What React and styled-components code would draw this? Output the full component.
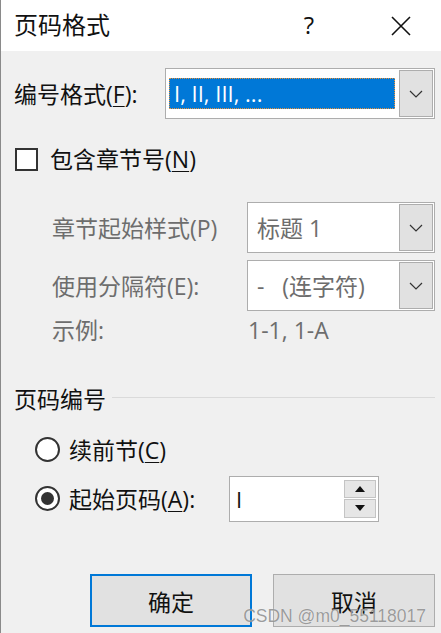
import React from "react"
import styled, { createGlobalStyle } from "styled-components"

const GlobalStyle = createGlobalStyle`
  html, body {
    margin: 0;
    padding: 0;
    background: #f0f0f0;
  }
  body {
    font-family: "Open Sans", "Noto Sans CJK SC", sans-serif;
  }
`

function Chevron() {
  return (
    <svg width="14" height="8" viewBox="0 0 14 8">
      <path d="M1 1 L7 7 L13 1" fill="none" stroke="#333" strokeWidth="1.2" />
    </svg>
  )
}

function ComboBox({ value, selected, disabled, width }) {
  return (
    <Combo width={width}>
      <ComboField>
        {selected ? (
          <Selection>{value}</Selection>
        ) : (
          <ComboText disabled={disabled}>{value}</ComboText>
        )}
      </ComboField>
      <DropButton>
        <Chevron />
      </DropButton>
    </Combo>
  )
}

export default function App() {
  return (
    <Window>
      <GlobalStyle />
      <TitleBar>
        <Title>页码格式</Title>
        <Help>?</Help>
        <Close>
          <svg width="20" height="20" viewBox="0 0 20 20">
            <path d="M1 1 L19 19 M19 1 L1 19" stroke="#111" strokeWidth="1.6" />
          </svg>
        </Close>
      </TitleBar>

      <Body>
        <FormatRow>
          <Label width={151}>
            编号格式(<u>F</u>):
          </Label>
          <ComboBox value="I, II, III, ..." selected width={270} />
        </FormatRow>

        <CheckRow>
          <CheckBox />
          <Label>
            包含章节号(<u>N</u>)
          </Label>
        </CheckRow>

        <Indent>
          <FieldRow top={28}>
            <Label width={195} disabled>
              章节起始样式(P)
            </Label>
            <ComboBox value="标题 1" disabled width={189} />
          </FieldRow>
          <FieldRow top={7}>
            <Label width={195} disabled>
              使用分隔符(E):
            </Label>
            <ComboBox value="-   (连字符)" disabled width={189} />
          </FieldRow>
          <ExampleRow>
            <Label width={196} disabled>
              示例:
            </Label>
            <Label disabled>1-1, 1-A</Label>
          </ExampleRow>
        </Indent>

        <SectionHeader>
          <Label>页码编号</Label>
          <Rule />
        </SectionHeader>

        <RadioRow top={12}>
          <Radio />
          <Label>
            续前节(<u>C</u>)
          </Label>
        </RadioRow>
        <RadioRow top={2}>
          <Radio checked />
          <Label width={160}>
            起始页码(<u>A</u>):
          </Label>
          <Spin>
            <SpinText>I</SpinText>
            <SpinButtons>
              <SpinButton>
                <svg width="10" height="6" viewBox="0 0 10 6">
                  <path d="M0 6 L5 0 L10 6 Z" fill="#111" />
                </svg>
              </SpinButton>
              <SpinButton>
                <svg width="10" height="6" viewBox="0 0 10 6">
                  <path d="M0 0 L5 6 L10 0 Z" fill="#111" />
                </svg>
              </SpinButton>
            </SpinButtons>
          </Spin>
        </RadioRow>
      </Body>

      <ButtonRow>
        <Button primary>确定</Button>
        <Button>取消</Button>
      </ButtonRow>

      <Watermark>CSDN @m0_55118017</Watermark>
    </Window>
  )
}

const Window = styled.div`
  position: relative;
  width: 440px;
  height: 633px;
  border-left: 1px solid #8a8a8a;
  background: #f0f0f0;
  display: flex;
  flex-direction: column;
  overflow: hidden;
  color: #111;
`

const TitleBar = styled.div`
  height: 51px;
  background: #ffffff;
  display: flex;
  align-items: center;
  padding-left: 13px;
`

const Title = styled.div`
  flex: 1;
  font-size: 24px;
  line-height: 30px;
  margin-top: -2px;
`

const Help = styled.div`
  font-size: 24px;
  width: 20px;
  text-align: center;
  margin-right: 72px;
  margin-top: -2px;
`

const Close = styled.div`
  width: 20px;
  height: 20px;
  margin-right: 30px;
  display: flex;
`

const Body = styled.div`
  padding: 0 6px 0 13px;
  display: flex;
  flex-direction: column;
`

const Label = styled.div`
  font-size: 23px;
  line-height: 30px;
  white-space: pre;
  flex-shrink: 0;
  width: ${(p) => (p.width ? `${p.width}px` : "auto")};
  color: ${(p) => (p.disabled ? "#6d6d6d" : "#111")};

  u {
    text-underline-offset: 3px;
    text-decoration-thickness: 1px;
  }
`

const FormatRow = styled.div`
  display: flex;
  align-items: center;
  margin-top: 17px;
`

const Combo = styled.div`
  width: ${(p) => p.width}px;
  height: 51px;
  box-sizing: border-box;
  border: 1px solid #adadad;
  background: #ffffff;
  display: flex;
  align-items: center;
  padding: 1px;
`

const ComboField = styled.div`
  flex: 1;
  height: 100%;
  display: flex;
  align-items: center;
  padding: 0 2px;
`

const Selection = styled.div`
  flex: 1;
  height: 31px;
  box-sizing: border-box;
  background: #0078d7;
  border: 1px dotted #e8923a;
  color: #ffffff;
  font-size: 22px;
  line-height: 28px;
  padding-left: 4px;
  margin-right: 2px;
`

const ComboText = styled.div`
  font-size: 23px;
  line-height: 30px;
  padding-left: 6px;
  white-space: pre;
  color: ${(p) => (p.disabled ? "#6d6d6d" : "#111")};
`

const DropButton = styled.div`
  width: 34px;
  height: 100%;
  box-sizing: border-box;
  border: 1px solid #adadad;
  background: #e1e1e1;
  display: flex;
  align-items: center;
  justify-content: center;
`

const CheckRow = styled.div`
  display: flex;
  align-items: center;
  gap: 12px;
  margin-top: 25px;
`

const CheckBox = styled.div`
  width: 23px;
  height: 23px;
  box-sizing: border-box;
  border: 2px solid #333;
  background: #ffffff;
  margin-left: 1px;
`

const Indent = styled.div`
  padding-left: 38px;
  display: flex;
  flex-direction: column;
`

const FieldRow = styled.div`
  display: flex;
  align-items: center;
  margin-top: ${(p) => p.top}px;
`

const ExampleRow = styled.div`
  display: flex;
  align-items: center;
  margin-top: 4px;
`

const SectionHeader = styled.div`
  display: flex;
  align-items: center;
  gap: 6px;
  margin-top: 39px;
`

const Rule = styled.div`
  flex: 1;
  height: 1px;
  background: #dadada;
  margin-top: -3px;
`

const RadioRow = styled.div`
  display: flex;
  align-items: center;
  padding-left: 21px;
  margin-top: ${(p) => p.top}px;
  min-height: 47px;
`

const Radio = styled.div`
  position: relative;
  width: 25px;
  height: 25px;
  box-sizing: border-box;
  border-radius: 50%;
  border: 2px solid #333;
  background: #ffffff;
  margin-right: 9px;
  flex-shrink: 0;

  &::after {
    content: "";
    display: ${(p) => (p.checked ? "block" : "none")};
    position: absolute;
    left: 4px;
    top: 4px;
    width: 13px;
    height: 13px;
    border-radius: 50%;
    background: #333;
  }
`

const Spin = styled.div`
  width: 150px;
  height: 46px;
  box-sizing: border-box;
  border: 1px solid #adadad;
  background: #ffffff;
  display: flex;
  align-items: center;
  padding: 3px 2px 3px 6px;
`

const SpinText = styled.div`
  flex: 1;
  font-size: 22px;
  line-height: 30px;
`

const SpinButtons = styled.div`
  width: 32px;
  height: 100%;
  display: flex;
  flex-direction: column;
  gap: 1px;
`

const SpinButton = styled.div`
  flex: 1;
  box-sizing: border-box;
  border: 1px solid #c4c4c4;
  background: #e6e6e6;
  display: flex;
  align-items: center;
  justify-content: center;
`

const ButtonRow = styled.div`
  margin-top: auto;
  margin-bottom: 6px;
  display: flex;
  justify-content: flex-end;
  gap: 21px;
  padding-right: 6px;
`

const Button = styled.div`
  width: 162px;
  height: 53px;
  box-sizing: border-box;
  border: ${(p) => (p.primary ? "2px solid #0078d7" : "1px solid #adadad")};
  background: #e1e1e1;
  display: flex;
  align-items: center;
  justify-content: center;
  font-size: 23px;
  color: #111;
`

const Watermark = styled.div`
  position: absolute;
  right: 15px;
  bottom: 6px;
  font-family: "Liberation Sans", Arial, sans-serif;
  font-size: 17.5px;
  color: rgba(125, 125, 125, 0.75);
  text-shadow: 0 0 1px rgba(255, 255, 255, 0.8);
  pointer-events: none;
`
